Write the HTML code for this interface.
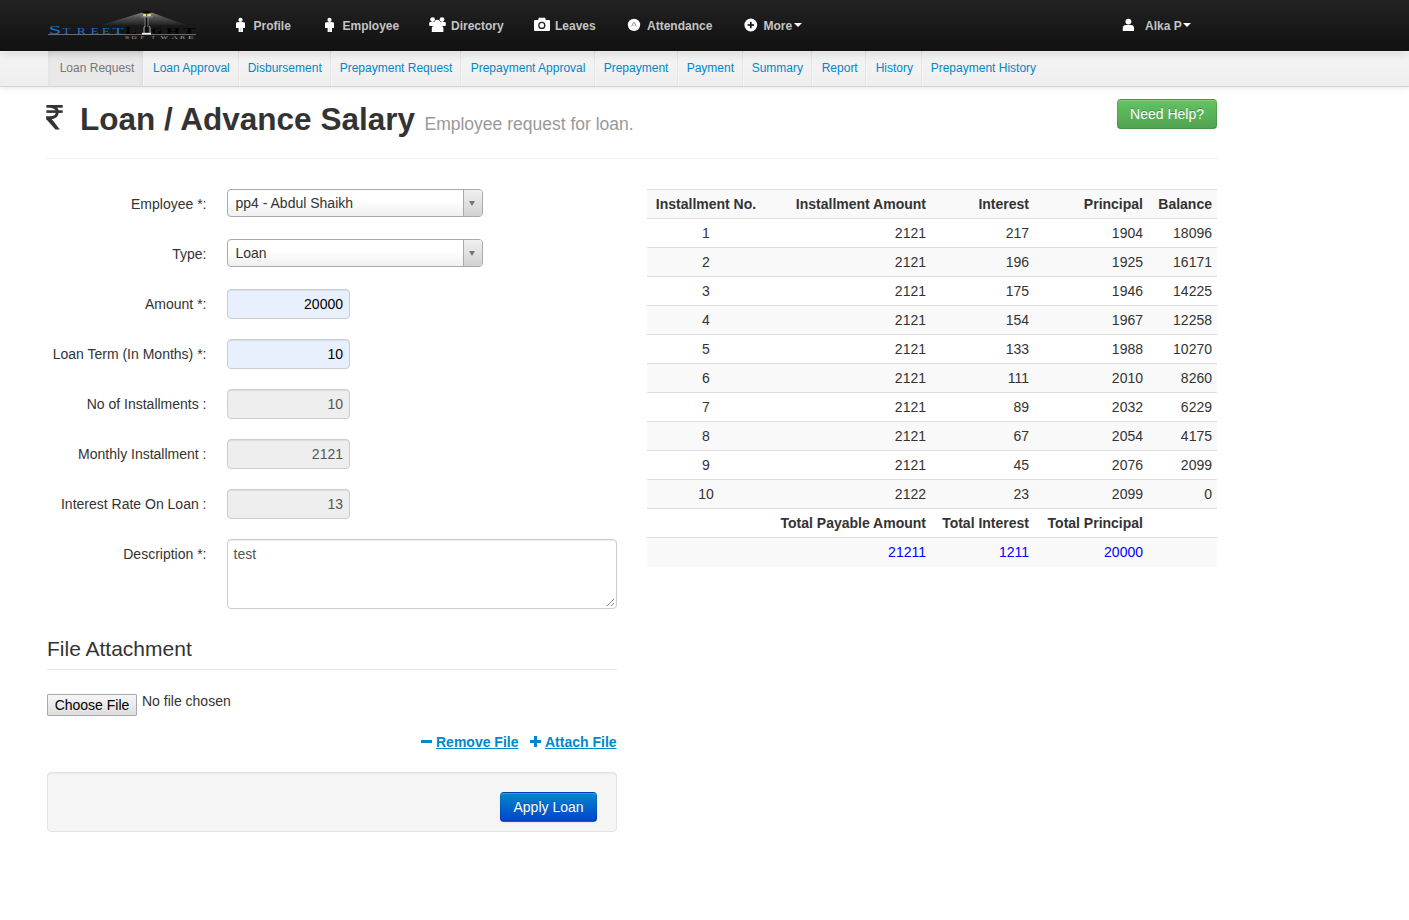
<!DOCTYPE html>
<html><head><meta charset="utf-8">
<style>
*{box-sizing:border-box}
html,body{margin:0;padding:0;background:#fff}
body{width:1409px;height:920px;overflow:hidden;position:relative;font-family:"Liberation Sans",sans-serif;font-size:14px;line-height:20px;color:#333}
.abs{position:absolute}
/* navbar */
#nav{position:absolute;z-index:2;left:0;top:0;width:1409px;height:51px;background:linear-gradient(#222,#111);box-shadow:0 1px 10px rgba(0,0,0,.17)}
.ni{position:absolute;top:16px;height:20px;line-height:20px;font-size:12px;font-weight:bold;color:#c4c4c4;white-space:nowrap}
.ni svg{position:absolute}
.caret{position:absolute;width:0;height:0;border-left:4px solid transparent;border-right:4px solid transparent;border-top:4px solid #fff}
/* subnav */
#sub{position:absolute;z-index:1;left:0;top:51px;width:1409px;height:36px;background:linear-gradient(#f5f5f5,#eee);border-bottom:1px solid #d5d5d5;box-shadow:inset 0 1px 0 #fff,0 1px 5px rgba(0,0,0,.1)}
.st{position:absolute;top:0;height:35px;border-right:1px solid #e5e5e5;border-left:1px solid #f5f5f5}
.st.act{background:#e9e9e9;border-right-color:#ddd;border-left:0;box-shadow:inset 0 3px 5px rgba(0,0,0,.05)}
.sl{position:absolute;top:7px;line-height:20px;font-size:12px;color:#0088cc;white-space:nowrap}
/* header */
h1{position:absolute;margin:0;left:47px;top:98.5px;font-size:31.5px;line-height:40px;font-weight:bold;color:#333;white-space:nowrap}
h1 small{font-size:17.5px;font-weight:normal;color:#999}
.hr{position:absolute;height:1px;background:#eee}
.btn-success{position:absolute;left:1117px;top:99px;width:100px;height:30px;border-radius:4px;color:#fff;text-align:center;line-height:28px;font-size:14px;background:linear-gradient(#62c462,#51a351);border:1px solid rgba(0,0,0,.1);border-bottom-color:rgba(0,0,0,.25);box-shadow:inset 0 1px 0 rgba(255,255,255,.2),0 1px 2px rgba(0,0,0,.05);text-shadow:0 -1px 0 rgba(0,0,0,.25)}
/* form */
.lbl{position:absolute;left:47px;width:159.5px;text-align:right;white-space:nowrap;line-height:20px}
.lbl i{font-style:normal}
.sel{position:absolute;left:227px;width:256px;height:28px;border:1px solid #aaa;border-radius:4px;background:linear-gradient(#fff 40%,#f0f0f0 100%)}
.sel span{position:absolute;left:7.5px;top:3px;line-height:20px;color:#333}
.sel b{position:absolute;right:0;top:0;width:19px;height:26px;border-left:1px solid #aaa;border-radius:0 3px 3px 0;background:linear-gradient(#f0f0f0,#d2d2d2)}
.sel b:after{content:"";position:absolute;left:5px;top:11px;border-left:3px solid transparent;border-right:3px solid transparent;border-top:5px solid #777}
.inp{position:absolute;left:227px;width:123px;height:30px;border:1px solid #ccc;border-radius:4px;text-align:right;padding:4px 6px;line-height:20px;box-shadow:inset 0 1px 1px rgba(0,0,0,.075)}
.inp.blue{background:#e8f0fe;color:#000}
.inp.dis{background:#eee;color:#555}

#tbl{position:absolute;left:647px;top:189px;width:570px;border-collapse:collapse;border-spacing:0;table-layout:fixed}
#tbl th,#tbl td{padding:4px 5px;line-height:20px;border-top:1px solid #ddd;text-align:right;vertical-align:top;height:29px}
#tbl th{font-weight:bold}
#tbl .c{text-align:center}
#tbl tr.odd td,#tbl tr.odd th{background:#f9f9f9}
#tbl tr.tot td{color:#00f}
#tbl col{}
</style></head><body>

<div id="nav">
<svg class="abs" style="left:40px;top:6px" width="165" height="38" viewBox="40 6 165 38">
 <defs><linearGradient id="lg" x1="0" y1="0" x2="0" y2="1"><stop offset="0" stop-color="#8a8a8a"/><stop offset="0.35" stop-color="#555"/><stop offset="1" stop-color="#222"/></linearGradient></defs>
 <polygon points="141.5,12.8 152,12.8 186,25 101,25" fill="url(#lg)"/>
 <text x="48.7" y="33.9" font-family="Liberation Serif" font-size="12" fill="#1a72cc" textLength="12.5" lengthAdjust="spacingAndGlyphs">S</text>
 <text x="62.5" y="33.9" font-family="Liberation Serif" font-size="8" fill="#1a72cc" textLength="8.0" lengthAdjust="spacingAndGlyphs">T</text>
 <text x="76.8" y="33.9" font-family="Liberation Serif" font-size="8" fill="#1a72cc" textLength="9.1" lengthAdjust="spacingAndGlyphs">R</text>
 <text x="90.5" y="33.9" font-family="Liberation Serif" font-size="8" fill="#1a72cc" textLength="8.5" lengthAdjust="spacingAndGlyphs">E</text>
 <text x="101.8" y="33.9" font-family="Liberation Serif" font-size="8" fill="#1a72cc" textLength="8.5" lengthAdjust="spacingAndGlyphs">E</text>
 <text x="112.5" y="33.9" font-family="Liberation Serif" font-size="8" fill="#1a72cc" textLength="11.0" lengthAdjust="spacingAndGlyphs">T</text>
 <text x="125" y="33.5" font-family="Liberation Serif" font-weight="bold" font-size="10.5" fill="#000" textLength="11.5" lengthAdjust="spacingAndGlyphs">L</text>
 <text x="151.5" y="33.5" font-family="Liberation Serif" font-weight="bold" font-size="7.5" fill="#000" textLength="11.0" lengthAdjust="spacingAndGlyphs">G</text>
 <text x="166" y="33.5" font-family="Liberation Serif" font-weight="bold" font-size="7.5" fill="#000" textLength="14.0" lengthAdjust="spacingAndGlyphs">H</text>
 <text x="183" y="33.5" font-family="Liberation Serif" font-weight="bold" font-size="7.5" fill="#000" textLength="12.5" lengthAdjust="spacingAndGlyphs">T</text>
 <rect x="48" y="34" width="148" height="1" fill="#6c6c6c"/>
 <text x="124.8" y="38.9" font-family="Liberation Serif" font-size="3.8" fill="#a8a8a8" textLength="4.5" lengthAdjust="spacingAndGlyphs">S</text>
 <text x="131.5" y="38.9" font-family="Liberation Serif" font-size="3.8" fill="#a8a8a8" textLength="5.2" lengthAdjust="spacingAndGlyphs">O</text>
 <text x="140.5" y="38.9" font-family="Liberation Serif" font-size="3.8" fill="#a8a8a8" textLength="3.7" lengthAdjust="spacingAndGlyphs">F</text>
 <text x="151.6" y="38.9" font-family="Liberation Serif" font-size="3.8" fill="#a8a8a8" textLength="3.2" lengthAdjust="spacingAndGlyphs">T</text>
 <text x="160.6" y="38.9" font-family="Liberation Serif" font-size="3.8" fill="#a8a8a8" textLength="7.4" lengthAdjust="spacingAndGlyphs">W</text>
 <text x="171.7" y="38.9" font-family="Liberation Serif" font-size="3.8" fill="#a8a8a8" textLength="6.0" lengthAdjust="spacingAndGlyphs">A</text>
 <text x="180" y="38.9" font-family="Liberation Serif" font-size="3.8" fill="#a8a8a8" textLength="5.2" lengthAdjust="spacingAndGlyphs">R</text>
 <text x="188" y="38.9" font-family="Liberation Serif" font-size="3.8" fill="#a8a8a8" textLength="6.0" lengthAdjust="spacingAndGlyphs">E</text>
 <path d="M145.2 17.5 V27 M147.8 17.5 V27" stroke="#bdbdbd" stroke-width="0.8"/>
 <path d="M144 33 V27.5 Q144 26.5 145 26.5 M149 26.5 Q150 26.5 150 27.5 V33" fill="none" stroke="#cfcfcf" stroke-width="0.8"/>
 <rect x="145.6" y="17.5" width="1.8" height="15.5" fill="#0a0a0a"/>
 <rect x="142" y="32.8" width="9" height="1.8" fill="#eee"/>
 <ellipse cx="146.6" cy="12.6" rx="4" ry="1.3" fill="#050505"/>
 <rect x="143" y="13.8" width="8" height="2.6" rx="0.8" fill="#e6dc6a"/>
 <rect x="146.3" y="13.8" width="0.9" height="2.6" fill="#222"/>
 <rect x="141" y="16.6" width="12" height="0.7" fill="#999"/>
</svg>

<svg class="abs" style="left:0;top:0" width="1409" height="51">
 <!-- profile -->
 <circle cx="240.5" cy="19.9" r="2.1" fill="#fff"/><path d="M236 28 V23.2 Q236 22.2 237 22.2 H244 Q245 22.2 245 23.2 V28 Z" fill="#fff"/><rect x="238.6" y="22.2" width="4.4" height="9.8" fill="#fff"/><rect x="240.6" y="28" width="0.5" height="4" fill="#aaa"/>
 <!-- employee -->
 <circle cx="329.5" cy="19.9" r="2.1" fill="#fff"/><path d="M325 28 V23.2 Q325 22.2 326 22.2 H333 Q334 22.2 334 23.2 V28 Z" fill="#fff"/><rect x="327.6" y="22.2" width="4.4" height="9.8" fill="#fff"/><rect x="329.6" y="28" width="0.5" height="4" fill="#aaa"/>
 <!-- directory -->
 <circle cx="432.6" cy="19.6" r="2.4" fill="#fff"/><circle cx="442" cy="19.6" r="2.4" fill="#fff"/>
 <rect x="429.2" y="22" width="16.6" height="4" rx="1" fill="#fff"/>
 <circle cx="437.3" cy="22.7" r="2.9" fill="#fff"/>
 <path d="M431.8 32 V28 Q431.8 26 434 26 H441.2 Q443.4 26 443.4 28 V32 Z" fill="#fff"/>
 <!-- camera -->
 <path d="M534 21 Q534 20 535 20 H538.2 L538.8 17.8 H545.2 L545.8 20 H549 Q550 20 550 21 V30 Q550 31 549 31 H535 Q534 31 534 30 Z" fill="#fff"/>
 <circle cx="541.8" cy="25.4" r="3.0" fill="none" stroke="#222" stroke-width="1.3"/>
 <!-- attendance -->
 <circle cx="634" cy="24.85" r="6.2" fill="#fff"/>
 <path d="M631.6 26.4 L634 22.2 L636.4 26.4" fill="none" stroke="#8a8a8a" stroke-width="0.9"/><path d="M632.5 25.3 H635.5" stroke="#bbb" stroke-width="0.6"/>
 <!-- more -->
 <circle cx="750.8" cy="25" r="6.4" fill="#fff"/>
 <rect x="747.6" y="24.2" width="6.4" height="1.6" fill="#111"/><rect x="750" y="21.8" width="1.6" height="6.4" fill="#111"/>
 <!-- user -->
 <circle cx="1128.4" cy="21.6" r="2.95" fill="#fff"/>
 <path d="M1122.8 31 V28 Q1122.8 25 1126 25 H1131 Q1134 25 1134 28 V31 Z" fill="#fff"/>
</svg>
<span class="ni" style="left:253.5px">Profile</span>
<span class="ni" style="left:342.5px">Employee</span>
<span class="ni" style="left:451px">Directory</span>
<span class="ni" style="left:555px">Leaves</span>
<span class="ni" style="left:647px">Attendance</span>
<span class="ni" style="left:763.5px">More</span>
<span class="caret" style="left:794px;top:23px"></span>
<span class="ni" style="left:1145px">Alka P</span>
<span class="caret" style="left:1183px;top:23px"></span>
</div>

<div id="sub">
<div class="st act" style="left:48px;width:95px"></div>
<div class="st" style="left:143px;width:96px"></div>
<div class="st" style="left:239px;width:92px"></div>
<div class="st" style="left:331px;width:130px"></div>
<div class="st" style="left:461px;width:134px"></div>
<div class="st" style="left:595px;width:83px"></div>
<div class="st" style="left:678px;width:65px"></div>
<div class="st" style="left:743px;width:69px"></div>
<div class="st" style="left:812px;width:54px"></div>
<div class="st" style="left:866px;width:56px"></div>
<div class="st" style="left:922px;width:127px;border-right:0"></div>
<span class="sl" style="left:59.7px;color:#777">Loan Request</span>
<span class="sl" style="left:153.0px">Loan Approval</span>
<span class="sl" style="left:247.7px">Disbursement</span>
<span class="sl" style="left:339.7px">Prepayment Request</span>
<span class="sl" style="left:470.7px">Prepayment Approval</span>
<span class="sl" style="left:603.7px">Prepayment</span>
<span class="sl" style="left:686.7px">Payment</span>
<span class="sl" style="left:751.7px">Summary</span>
<span class="sl" style="left:821.7px">Report</span>
<span class="sl" style="left:875.7px">History</span>
<span class="sl" style="left:930.7px">Prepayment History</span>
</div>

<svg class="abs" style="left:44px;top:103px" width="22" height="30" viewBox="44 103 22 30">
 <rect x="46.4" y="105" width="16.3" height="2.7" fill="#333"/>
 <rect x="46.4" y="110.3" width="16.3" height="2.6" fill="#333"/>
 <path d="M50.5 106.5 Q57.3 106.8 57.3 112 Q57.3 117.7 50 117.7 H46.4" fill="none" stroke="#333" stroke-width="2.9"/>
 <polygon points="46.4,116.3 50.8,117.8 59.8,129.6 55.4,129.6 46.4,119.2" fill="#333"/>
</svg>
<h1 style="left:80px">Loan / Advance Salary</h1>
<div class="abs" style="left:424.5px;top:109px;font-size:17.5px;line-height:30px;color:#999;white-space:nowrap">Employee request for loan.</div>
<div class="btn-success">Need Help?</div>
<div class="hr" style="left:47px;top:158px;width:1170px"></div>

<div class="lbl" style="top:194px">Employee <i>*</i>:</div>
<div class="sel" style="top:189px"><span>pp4 - Abdul Shaikh</span><b></b></div>
<div class="lbl" style="top:244px">Type:</div>
<div class="sel" style="top:239px"><span>Loan</span><b></b></div>
<div class="lbl" style="top:294px">Amount <i>*</i>:</div>
<div class="inp blue" style="top:289px">20000</div>
<div class="lbl" style="top:344px">Loan Term (In Months) <i>*</i>:</div>
<div class="inp blue" style="top:339px">10</div>
<div class="lbl" style="top:394px">No of Installments :</div>
<div class="inp dis" style="top:389px">10</div>
<div class="lbl" style="top:444px">Monthly Installment :</div>
<div class="inp dis" style="top:439px">2121</div>
<div class="lbl" style="top:494px">Interest Rate On Loan :</div>
<div class="inp dis" style="top:489px">13</div>
<div class="lbl" style="top:544px">Description <i>*</i>:</div>
<div class="abs" style="left:227px;top:539px;width:390px;height:70px;border:1px solid #ccc;border-radius:4px;padding:4px 6px 4px 5.5px;color:#555;box-shadow:inset 0 1px 1px rgba(0,0,0,.075)">test
 <svg class="abs" style="right:1px;bottom:1px" width="9" height="9"><path d="M8 1 L1 8 M8 5 L5 8" stroke="#888" stroke-width="1"/></svg></div>

<div class="abs" style="left:47px;top:629px;width:570px;height:41px;font-size:21px;line-height:40px;border-bottom:1px solid #e5e5e5;color:#333">File Attachment</div>
<div class="abs" style="left:47px;top:694px;width:90px;height:22px;border:1px solid #a9a9a9;background:linear-gradient(#f6f6f6,#dedede);border-radius:1px;font-size:14px;line-height:20px;text-align:center;color:#000">Choose File</div>
<div class="abs" style="left:142px;top:691px;font-size:14px;line-height:20px;color:#333">No file chosen</div>
<div class="abs" style="left:421px;top:732px;font-size:14px;line-height:20px;font-weight:bold;color:#0088cc;white-space:nowrap">
 <span style="display:inline-block;width:11px;height:3px;background:#0088cc;vertical-align:middle;margin-right:4px;position:relative;top:-1.5px"></span><u>Remove File</u>
</div>
<div class="abs" style="left:530px;top:732px;font-size:14px;line-height:20px;font-weight:bold;color:#0088cc;white-space:nowrap">
 <span style="display:inline-block;width:11px;height:11px;position:relative;top:0px;margin-right:4px"><span class="abs" style="left:0;top:4px;width:11px;height:3px;background:#0088cc"></span><span class="abs" style="left:4px;top:0;width:3px;height:11px;background:#0088cc"></span></span><u>Attach File</u>
</div>
<div class="abs" style="left:47px;top:772px;width:570px;height:60px;background:#f5f5f5;border:1px solid #e3e3e3;border-radius:4px;box-shadow:inset 0 1px 1px rgba(0,0,0,.05)"></div>
<div class="abs" style="left:500px;top:792px;width:97px;height:30px;border-radius:4px;color:#fff;text-align:center;line-height:28px;font-size:14px;background:linear-gradient(#0088cc,#0044cc);border:1px solid rgba(0,0,0,.1);border-bottom-color:rgba(0,0,0,.25);box-shadow:inset 0 1px 0 rgba(255,255,255,.2),0 1px 2px rgba(0,0,0,.05);text-shadow:0 -1px 0 rgba(0,0,0,.25)">Apply Loan</div>
<table id="tbl"><colgroup><col style="width:118px"><col style="width:166px"><col style="width:103px"><col style="width:114px"><col style="width:69px"></colgroup>
<tr class="odd"><th class="c">Installment No.</th><th>Installment Amount</th><th>Interest</th><th>Principal</th><th>Balance</th></tr>
<tr class=""><td class="c">1</td><td>2121</td><td>217</td><td>1904</td><td>18096</td></tr>
<tr class="odd"><td class="c">2</td><td>2121</td><td>196</td><td>1925</td><td>16171</td></tr>
<tr class=""><td class="c">3</td><td>2121</td><td>175</td><td>1946</td><td>14225</td></tr>
<tr class="odd"><td class="c">4</td><td>2121</td><td>154</td><td>1967</td><td>12258</td></tr>
<tr class=""><td class="c">5</td><td>2121</td><td>133</td><td>1988</td><td>10270</td></tr>
<tr class="odd"><td class="c">6</td><td>2121</td><td>111</td><td>2010</td><td>8260</td></tr>
<tr class=""><td class="c">7</td><td>2121</td><td>89</td><td>2032</td><td>6229</td></tr>
<tr class="odd"><td class="c">8</td><td>2121</td><td>67</td><td>2054</td><td>4175</td></tr>
<tr class=""><td class="c">9</td><td>2121</td><td>45</td><td>2076</td><td>2099</td></tr>
<tr class="odd"><td class="c">10</td><td>2122</td><td>23</td><td>2099</td><td>0</td></tr>
<tr><th></th><th>Total Payable Amount</th><th>Total Interest</th><th>Total Principal</th><th></th></tr>
<tr class="odd tot"><td></td><td>21211</td><td>1211</td><td>20000</td><td></td></tr>
</table>

</body></html>
